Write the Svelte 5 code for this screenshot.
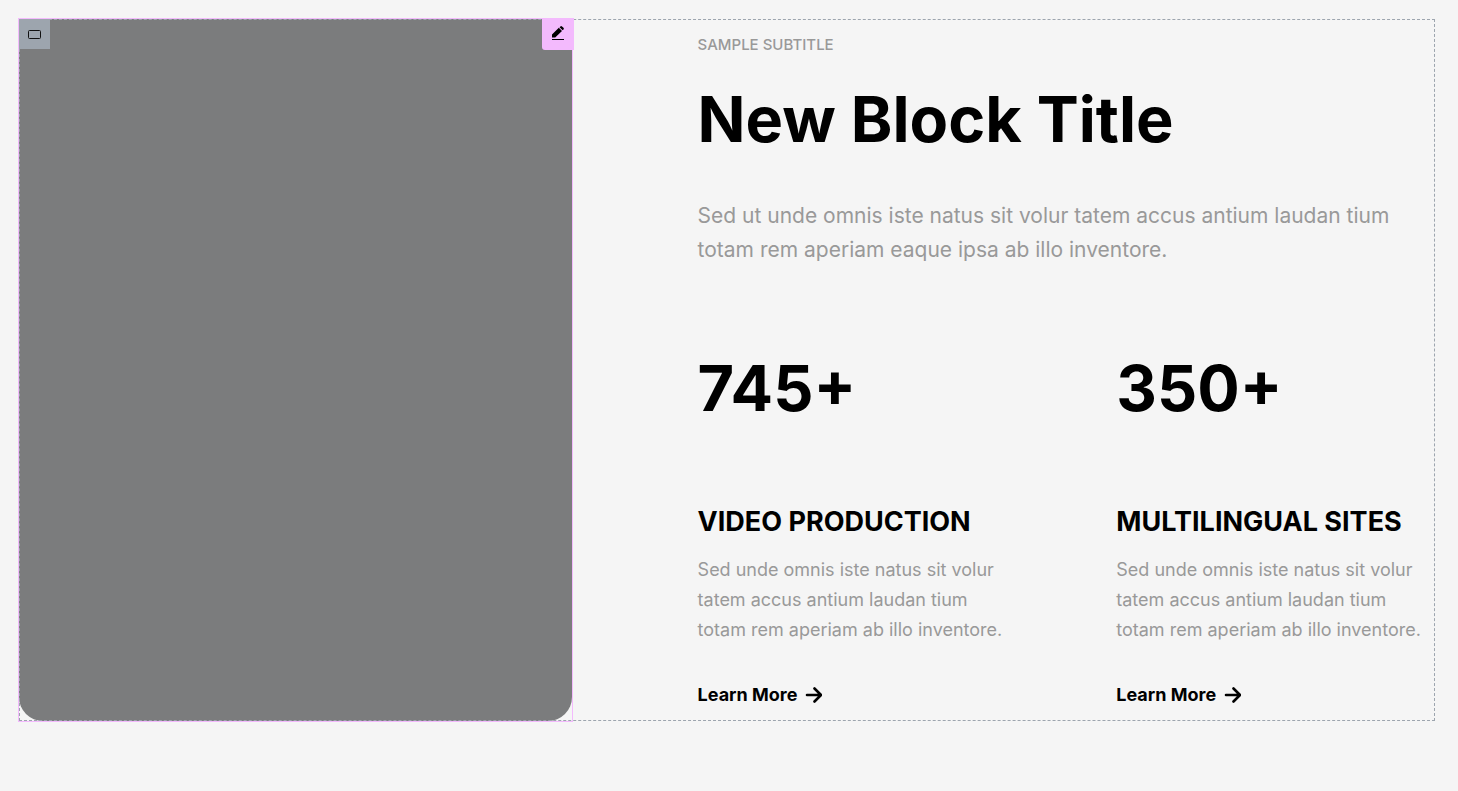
<script lang="ts">
	const stats = [
		{ value: '745+', title: 'Video Production' },
		{ value: '350+', title: 'Multilingual Sites' }
	];
</script>

<section>
	<div class="media">
		<button class="handle" aria-label="Select container">
			<svg width="15" height="10" viewBox="0 0 15 10">
				<rect x="1.5" y="1.5" width="12" height="8" rx="1" fill="none" stroke="#111" />
			</svg>
		</button>
		<button class="edit" aria-label="Edit">
			<svg width="14" height="14" viewBox="0 0 14 14">
				<path
					d="M1 8.6 7.8 1.8l3.2 3.2-6.8 6.4H1zM8.5 1.2 9.4.4q.8-.7 1.6 0l1.5 1.4q.7.8 0 1.6l-.8.9zM1 13h12v1H1z"
				/>
			</svg>
		</button>
		<div class="image"></div>
	</div>

	<div class="content">
		<p class="subtitle">Sample Subtitle</p>
		<h1>New Block Title</h1>
		<p class="lead">
			Sed ut unde omnis iste natus sit volur tatem accus antium laudan tium totam rem aperiam eaque
			ipsa ab illo inventore.
		</p>

		<div class="stats">
			{#each stats as stat}
				<article>
					<div class="value">{stat.value}</div>
					<h2>{stat.title}</h2>
					<p>
						Sed unde omnis iste natus sit volur tatem accus antium laudan tium totam rem aperiam ab
						illo inventore.
					</p>
					<a href="#more">
						Learn More
						<svg width="17" height="18" viewBox="0 0 17 18">
							<path
								d="M2 9h14M9.5 2.5 16 9l-6.500 6.500"
								fill="none"
								stroke="#000"
								stroke-width="2.6"
								stroke-linecap="round"
								stroke-linejoin="round"
							/>
						</svg>
					</a>
				</article>
			{/each}
		</div>
	</div>
</section>

<style>
	:global(body) {
		margin: 0;
		background: #f5f5f5;
		font-family: Inter, 'Open Sans', sans-serif;
	}

	section {
		position: relative;
		display: grid;
		grid-template-columns: 16fr 25fr;
		margin: 19px 23px 19px 19px;
	}

	/* dashed container frame, drawn over the image */
	section::after {
		content: '';
		position: absolute;
		inset: 0;
		border: 1px dashed #9da5ae;
		pointer-events: none;
	}

	h1,
	h2,
	p {
		margin: 0;
	}

	.media {
		position: relative;
		display: flex;
		outline: 1px solid #f3bafd;
	}

	.image {
		flex: 1;
		background: #7b7c7d;
		border-radius: 0 0 24px 24px;
	}

	button {
		position: absolute;
		z-index: 1;
		display: flex;
		align-items: center;
		justify-content: center;
		padding: 0;
		border: none;
	}

	.handle {
		top: 0;
		left: 0;
		width: 31px;
		height: 30px;
		background: #9da5ae;
	}

	.edit {
		top: -1px;
		right: -2px;
		width: 32px;
		height: 32px;
		background: #f3bafd;
		border-radius: 0 0 0 3px;
	}

	.edit svg {
		margin-bottom: 2px;
	}

	.content {
		min-width: 0;
		padding: 16px 10px 12px 126px;
	}

	.subtitle {
		color: #999;
		font-size: 15px;
		font-weight: 500;
		line-height: 20px;
		text-transform: uppercase;
	}

	h1,
	.value {
		font-size: 63px;
		font-weight: 700;
		line-height: 72px;
	}

	h1 {
		margin-top: 28px;
	}

	.lead {
		margin-top: 44px;
		color: #999;
		font-size: 21px;
		line-height: 34px;
	}

	.stats {
		display: grid;
		grid-template-columns: 1fr 1fr;
		gap: 110px;
		margin-top: 85px;
	}

	h2 {
		margin-top: 80px;
		font-size: 27px;
		font-weight: 700;
		line-height: 36px;
		text-transform: uppercase;
		white-space: nowrap;
	}

	article p {
		margin-top: 15px;
		color: #999;
		font-size: 18px;
		line-height: 30px;
	}

	a {
		display: flex;
		align-items: center;
		gap: 8px;
		margin-top: 36px;
		color: #000;
		font-size: 18px;
		font-weight: 700;
		line-height: 28px;
		text-decoration: none;
	}
</style>
